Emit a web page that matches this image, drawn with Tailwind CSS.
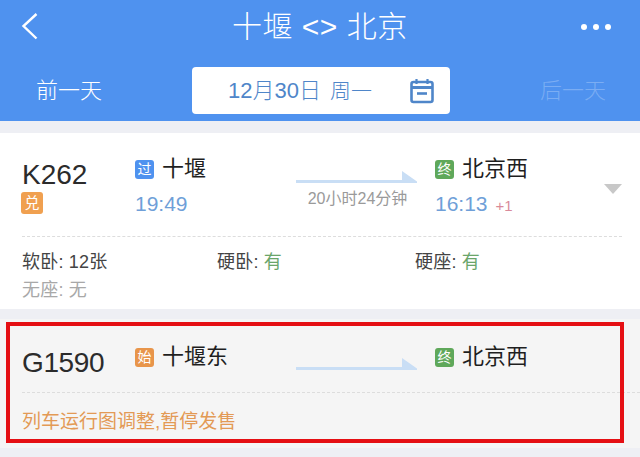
<!DOCTYPE html>
<html lang="zh">
<head>
    <meta charset="UTF-8">
    <meta name="viewport" content="width=device-width, initial-scale=1.0">
    <title>十堰 &lt;&gt; 北京</title>
    <script src="https://cdn.jsdelivr.net/npm/@tailwindcss/browser@4"></script>
</head>
<body class="bg-[#eeeff4] font-['Liberation_Sans','Noto_Sans_CJK_SC',sans-serif] overflow-hidden">
    <div class="relative w-[640px] h-[457px] overflow-hidden">
        <!-- Header -->
        <header class="bg-[#4f92ef] h-[121px] text-white">
            <div class="relative flex items-center h-[54px] pl-[21px] pr-[29px]">
                <svg class="w-[18px] h-[30px]" viewBox="0 0 18 30" fill="none" stroke="white" stroke-width="2.4">
                    <path d="M15.5 2 L2.5 14 L15.5 26.5"></path>
                </svg>
                <h1 class="text-[30px] leading-none font-light tracking-[0.5px] ml-[193px]">十堰 &lt;&gt; 北京</h1>
                <div class="flex gap-[6px] ml-auto">
                    <span class="w-[6px] h-[6px] rounded-full bg-white"></span>
                    <span class="w-[6px] h-[6px] rounded-full bg-white"></span>
                    <span class="w-[6px] h-[6px] rounded-full bg-white"></span>
                </div>
            </div>
            <div class="flex items-center mt-[13px] h-[47px] text-[22px] leading-none font-light">
                <span class="w-[192px] pl-[36px]">前一天</span>
                <div class="w-[258px] h-[47px] bg-white rounded-[4px] flex items-center pl-[36px] pr-[16px] text-[#4f86c9] text-[22px]">
                    <span>12月30日</span>
                    <span class="ml-[9px] text-[21px]">周一</span>
                    <svg class="ml-auto w-[24px] h-[26px]" viewBox="0 0 24 26" fill="none" stroke="#4f86c9">
                        <rect x="1.5" y="4" width="21" height="20" rx="2" stroke-width="2.6"></rect>
                        <path d="M1.5 9.5H22.5" stroke-width="3"></path>
                        <path d="M6.5 1V6M17.5 1V6" stroke-width="2.2"></path>
                        <path d="M7 15.5H17" stroke-width="2.6"></path>
                    </svg>
                </div>
                <span class="pl-[90px] text-white/25">后一天</span>
            </div>
        </header>

        <!-- K262 -->
        <section class="bg-white mt-[12px] h-[176px] pl-[22px] pr-[18px]">
            <div class="flex h-[104px] border-b border-dashed border-[#dddddd]">
                <div class="w-[113px] pt-[25px]">
                    <div class="text-[28px] leading-[34px] text-[#2b2b2b]">K262</div>
                    <div class="w-[22px] h-[22px] -ml-[1px] rounded-[3px] bg-[#f0a050] text-white text-[15px] leading-[22px] text-center">兑</div>
                </div>
                <div class="w-[161px] pt-[26px]">
                    <div class="flex items-center h-[20px]">
                        <span class="w-[19px] h-[19px] rounded-[3px] bg-[#4f92ef] text-white text-[14px] leading-[19px] text-center">过</span>
                        <span class="ml-[8px] text-[22px] leading-none text-[#1f1f1f]">十堰</span>
                    </div>
                    <div class="mt-[12px] text-[21px] leading-[26px] text-[#6f9fd8]">19:49</div>
                </div>
                <div class="w-[139px] pt-[38px]">
                    <svg class="w-[121px] h-[13px]" viewBox="0 0 121 13">
                        <path d="M0 9H106V0L121 10.500V12H0Z" fill="#c9def5"></path>
                    </svg>
                    <div class="w-[123px] mt-[6px] text-center text-[16px] leading-[18px] whitespace-nowrap text-[#9a9a9a]">20小时24分钟</div>
                </div>
                <div class="pt-[26px]">
                    <div class="flex items-center h-[20px]">
                        <span class="w-[19px] h-[19px] rounded-[3px] bg-[#5fa85a] text-white text-[14px] leading-[19px] text-center">终</span>
                        <span class="ml-[8px] text-[22px] leading-none text-[#1f1f1f]">北京西</span>
                    </div>
                    <div class="mt-[12px] flex items-baseline">
                        <span class="text-[21px] leading-[26px] text-[#6f9fd8]">16:13</span>
                        <span class="ml-[8px] text-[15px] text-[#d98a9a]">+1</span>
                    </div>
                </div>
                <svg class="ml-auto mt-[51px] w-[18px] h-[10px]" viewBox="0 0 18 10">
                    <path d="M0 0H18L9 10Z" fill="#c8c8c8"></path>
                </svg>
            </div>
            <div class="grid grid-cols-[195px_198px_1fr] pt-[11px] text-[18px] leading-[28px] tracking-[0.2px] text-[#444444]">
                <span>软卧: 12张</span>
                <span>硬卧: <span class="text-[#6aa56a]">有</span></span>
                <span>硬座: <span class="text-[#6aa56a]">有</span></span>
                <span class="text-[#a8a8a8]">无座: 无</span>
            </div>
        </section>

        <!-- G1590 -->
        <section class="bg-[#f5f5f5] mt-[10px] h-[129px] pl-[22px]">
            <div class="flex h-[74px] border-b border-dashed border-[#dddddd]">
                <div class="w-[113px] pt-[27px] text-[28px] leading-[34px] tracking-[-0.4px] text-[#2b2b2b]">G1590</div>
                <div class="w-[161px] pt-[28px]">
                    <div class="flex items-center h-[20px]">
                        <span class="w-[19px] h-[19px] rounded-[3px] bg-[#e8954a] text-white text-[14px] leading-[19px] text-center">始</span>
                        <span class="ml-[8px] text-[22px] leading-none text-[#1f1f1f]">十堰东</span>
                    </div>
                </div>
                <div class="w-[139px] pt-[39px]">
                    <svg class="w-[121px] h-[13px]" viewBox="0 0 121 13">
                        <path d="M0 9H106V0L121 10.500V12H0Z" fill="#c9def5"></path>
                    </svg>
                </div>
                <div class="pt-[28px]">
                    <div class="flex items-center h-[20px]">
                        <span class="w-[19px] h-[19px] rounded-[3px] bg-[#5fa85a] text-white text-[14px] leading-[19px] text-center">终</span>
                        <span class="ml-[8px] text-[22px] leading-none text-[#1f1f1f]">北京西</span>
                    </div>
                </div>
            </div>
            <div class="pt-[16px] text-[19px] leading-[26px] text-[#e39a55]">列车运行图调整,暂停发售</div>
        </section>

        <!-- red annotation drawn over the screenshot -->
        <div class="absolute left-[6px] top-[322px] w-[618px] h-[121px] border-[4px] border-[#e50f13]"></div>
    </div>
</body>
</html>
